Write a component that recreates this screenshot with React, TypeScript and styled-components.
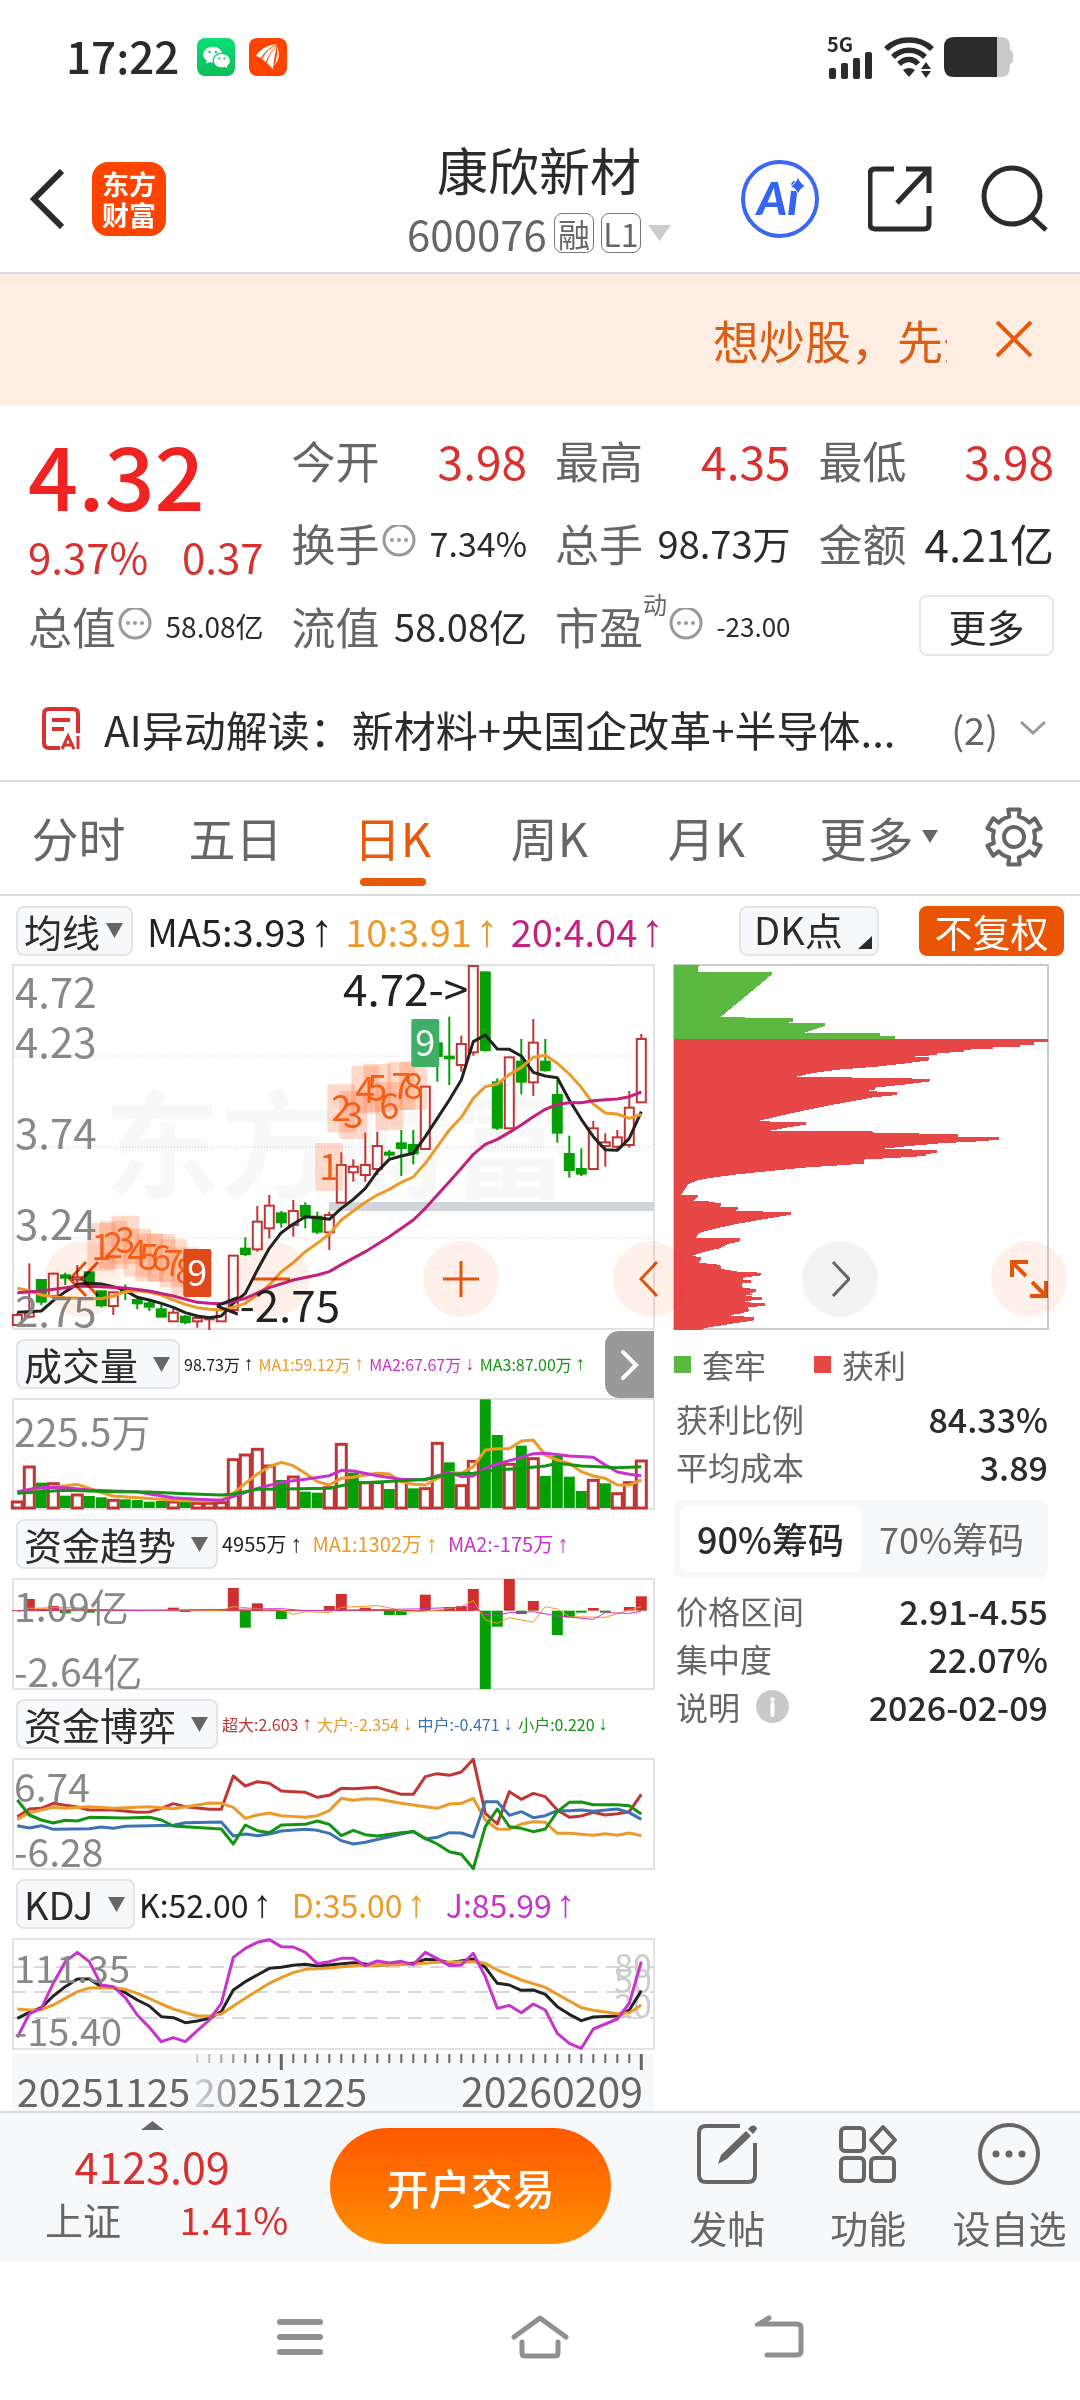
import React from "react";
import styled, { createGlobalStyle, css } from "styled-components";
import { RiWechatFill } from "react-icons/ri";

const C = {
  ink: "#2b2b2b",
  gray: "#666666",
  axis: "#888888",
  line: "#dcdcdc",
  soft: "#f7f8fa",
  red: "#d93030",
  up: "#c03635",
  down: "#05a005",
  orange: "#e8590c",
  ma1: "#222222",
  ma2: "#ec9a29",
  ma3: "#c3207f",
  violet: "#c833cc",
  green: "#149414",
  blue: "#3d72b4",
};

const FONT = '"Noto Sans CJK SC", "Noto Sans", sans-serif';

const Global = createGlobalStyle`
  * { box-sizing: border-box; }
  body { margin: 0; background: #fff; font-family: ${FONT}; color: ${C.ink}; }
  button, select { font: inherit; color: inherit; background: none; border: 0; padding: 0; margin: 0; }
  button { cursor: pointer; }
  svg { display: block; flex: none; }
  h1, p, dl, dd, dt { margin: 0; font-weight: 400; }
`;

/* ---------- shared chart helpers ---------- */

const BARS = 53;
const cx = (i: number) => 17.3 + 12 * i;

const toPoints = (flat: number[], top: number) => {
  const out: string[] = [];
  for (let k = 0; k < flat.length; k += 2) out.push(`${cx(flat[k])},${top + flat[k + 1] / 3}`);
  return out.join(" ");
};

const Line = ({ data, top, color, width = 3 }: { data: number[]; top: number; color: string; width?: number }) => (
  <polyline points={toPoints(data, top)} fill="none" stroke={color} strokeWidth={width} strokeLinejoin="round" />
);

const Plot = styled.svg`
  width: 100%;
  height: auto;
  overflow: visible;
`;
const PlotText = styled.text<{ $size?: number; $weight?: number; $color?: string }>`
  font-family: ${FONT};
  font-size: ${(p) => p.$size ?? 39}px;
  font-weight: ${(p) => p.$weight ?? 400};
  fill: ${(p) => p.$color ?? C.axis};
`;

const Frame = ({ y, h }: { y: number; h: number }) => (
  <rect x="13" y={y} width="641" height={h} fill="none" stroke="#e3e3e3" strokeWidth="2" />
);

/* ---------- status bar ---------- */

const StatusBar = styled.div`
  display: flex;
  align-items: center;
  height: 114px;
  padding: 0 67px 0 66px;
  gap: 14px;
`;
const Clock = styled.span`
  font-size: 44px;
  line-height: 60px;
  font-weight: 500;
  margin: 0 4px 4px 0;
`;
const AppBadge = styled.span<{ $bg: string }>`
  display: grid;
  place-items: center;
  width: 38px;
  height: 38px;
  border-radius: 8px;
  background: ${(p) => p.$bg};
  color: #fff;
`;
const StatusRight = styled.div`
  display: flex;
  align-items: center;
  gap: 10px;
  margin-left: auto;
`;
const Signal = styled.div`
  display: grid;
  span {
    font-size: 20px;
    line-height: 16px;
    font-weight: 700;
  }
`;

/* ---------- header ---------- */

const Header = styled.header`
  display: grid;
  grid-template-columns: 1fr auto 1fr;
  align-items: center;
  height: 160px;
  padding: 11px 32px 0 30px;
  border-bottom: 2px solid ${C.line};
`;
const HeadLeft = styled.div`
  display: flex;
  align-items: center;
  gap: 28px;
`;
const Logo = styled.a`
  display: grid;
  place-content: center;
  width: 74px;
  height: 74px;
  border-radius: 16px;
  background: #ff4400;
  color: #fff;
  font-size: 27px;
  line-height: 31px;
  font-weight: 700;
  text-decoration: none;
`;
const HeadMid = styled.div`
  text-align: center;
`;
const Title = styled.h1`
  font-size: 51px;
  line-height: 68px;
`;
const Code = styled.button`
  display: flex;
  align-items: center;
  gap: 7px;
  font-size: 42px;
  line-height: 60px;
  color: ${C.gray};
`;
const Tag = styled.span`
  display: grid;
  place-items: center;
  width: 40px;
  height: 40px;
  border: 1px solid #777;
  border-radius: 8px;
  font-size: 32px;
  line-height: 36px;
`;
const HeadRight = styled.div`
  display: flex;
  align-items: center;
  justify-content: flex-end;
  gap: 49px;
`;

/* ---------- banner ---------- */

const Banner = styled.div`
  display: flex;
  align-items: center;
  justify-content: flex-end;
  gap: 48px;
  height: 132px;
  padding: 0 47px 2px 28px;
  background: #fdede3;
  color: ${C.orange};
`;
const Marquee = styled.a`
  width: 234px;
  overflow: hidden;
  white-space: nowrap;
  font-size: 46px;
  line-height: 64px;
  color: #d85f17;
  text-decoration: none;
`;

/* ---------- quote ---------- */

const Quote = styled.section`
  display: grid;
  grid-template-columns: repeat(4, minmax(0, 1fr));
  grid-auto-rows: 83px;
  column-gap: 28px;
  padding: 12px 26px 12px 28px;
`;
const PriceBlock = styled.div`
  grid-row: span 2;
  color: ${C.red};
`;
const Price = styled.p`
  font-size: 88px;
  line-height: 110px;
  font-weight: 500;
  color: #f02323;
`;
const Change = styled.p`
  display: flex;
  justify-content: space-between;
  font-size: 42px;
  line-height: 56px;
`;
const Cell = styled.div`
  display: flex;
  align-items: center;
  white-space: nowrap;
`;
const Label = styled.span`
  font-size: 44px;
  color: ${C.gray};
`;
const Sup = styled.sup`
  align-self: flex-start;
  font-size: 24px;
  line-height: 36px;
  padding-top: 2px;
  color: ${C.gray};
`;
const Value = styled.span<{ $size: number; $up?: boolean }>`
  margin-left: auto;
  font-size: ${(p) => p.$size}px;
  color: ${(p) => (p.$up ? C.red : C.ink)};
`;
const MoreButton = styled.button`
  width: 135px;
  height: 61px;
  margin-left: auto;
  border: 2px solid #e6e6e6;
  border-radius: 8px;
  font-size: 38px;
  line-height: 54px;
`;

const Insight = styled.button`
  display: flex;
  align-items: center;
  width: 100%;
  height: 101px;
  padding: 0 34px 3px 42px;
  font-size: 42px;
  white-space: nowrap;
  text-align: left;
`;
const InsightText = styled.span`
  flex: 1;
  margin-left: 24px;
`;
const Count = styled.span`
  font-size: 38px;
  margin-right: 22px;
  color: ${C.gray};
`;

/* ---------- tabs ---------- */

const Tabs = styled.nav`
  display: grid;
  grid-template-columns: repeat(5, 157fr) 187fr 84fr;
  height: 116px;
  padding-right: 24px;
  border-top: 2px solid ${C.line};
  border-bottom: 2px solid ${C.line};
`;
const Tab = styled.button<{ $active?: boolean }>`
  display: flex;
  align-items: center;
  justify-content: center;
  gap: 8px;
  position: relative;
  padding-bottom: 3px;
  font-size: 47px;
  white-space: nowrap;
  color: ${(p) => (p.$active ? C.orange : C.gray)};
  ${(p) =>
    p.$active &&
    css`
      &::after {
        content: "";
        position: absolute;
        bottom: 8px;
        width: 66px;
        height: 8px;
        border-radius: 4px;
        background: ${C.orange};
      }
    `}
`;

/* ---------- indicator rows ---------- */

const Picker = styled.label<{ $gap?: number }>`
  display: flex;
  align-items: center;
  gap: ${(p) => p.$gap ?? 24}px;
  flex: none;
  height: 50px;
  padding: 0 8px 0 6px;
  border: 2px solid #e2e4e8;
  border-radius: 8px;
  background: ${C.soft};
  select {
    appearance: none;
    font-size: 38px;
    line-height: 46px;
    height: 46px;
    outline: 0;
  }
`;
const MaRow = styled.div`
  display: flex;
  align-items: center;
  height: 69px;
  padding: 0 16px;
  gap: 14px;
`;
const Readings = styled.div<{ $size: number; $gap: number }>`
  display: flex;
  align-items: center;
  gap: ${(p) => p.$gap}px;
  font-size: ${(p) => p.$size}px;
  line-height: 48px;
  white-space: nowrap;
`;
const Reading = styled.span<{ $color: string }>`
  display: inline-flex;
  align-items: center;
  color: ${(p) => p.$color};
`;
const Arrow = styled.span`
  font-family: "Liberation Sans", sans-serif;
  font-size: 1.2em;
  margin-left: 4px;
`;
const DkButton = styled.button`
  display: flex;
  align-items: flex-end;
  justify-content: space-between;
  width: 140px;
  height: 50px;
  margin-left: auto;
  padding: 0 5px 5px 13px;
  border: 2px solid #e2e4e8;
  border-radius: 8px;
  background: ${C.soft};
  font-size: 38px;
  line-height: 41px;
`;
const AdjustButton = styled.button`
  width: 145px;
  height: 50px;
  margin-left: 26px;
  border-radius: 8px;
  background: #e95504;
  color: #fff;
  font-size: 38px;
  line-height: 48px;
`;
const PanelHead = styled.div`
  display: flex;
  align-items: center;
  height: 70px;
  padding-left: 4px;
  gap: 4px;
`;
const Expander = styled.button`
  display: grid;
  place-items: center;
  flex: none;
  align-self: flex-start;
  width: 49px;
  height: 67px;
  margin: 2px 0 0 auto;
  border-radius: 14px 0 0 14px;
  background: #999;
`;

/* ---------- chart area ---------- */

const Body = styled.main`
  position: relative;
  display: grid;
  grid-template-columns: minmax(0, 642fr) minmax(0, 374fr);
  column-gap: 20px;
  padding: 0 32px 0 12px;
`;
const FabRow = styled.div`
  position: absolute;
  top: 276px;
  left: 45px;
  right: 13px;
  display: flex;
  justify-content: space-between;
  mix-blend-mode: multiply;
  pointer-events: none;
`;
const Fab = styled.button<{ $muted?: boolean }>`
  display: grid;
  place-items: center;
  width: 76px;
  height: 76px;
  border-radius: 50%;
  pointer-events: auto;
  color: ${(p) => (p.$muted ? "#666" : "#e0560f")};
  background: ${(p) => (p.$muted ? "#f3f3f3" : "#fff1ea")};
`;

const Legend = styled.div`
  display: flex;
  align-items: center;
  gap: 48px;
  height: 66px;
  padding-top: 4px;
  font-size: 32px;
  color: ${C.gray};
`;
const LegendItem = styled.span<{ $color: string }>`
  display: flex;
  align-items: center;
  gap: 11px;
  &::before {
    content: "";
    width: 17px;
    height: 17px;
    background: ${(p) => p.$color};
  }
`;
const Stats = styled.dl`
  padding-left: 2px;
`;
const Stat = styled.div`
  display: flex;
  align-items: center;
  justify-content: space-between;
  height: 48px;
  padding-bottom: 2px;
  dt {
    display: flex;
    align-items: center;
    gap: 16px;
    font-size: 32px;
    color: ${C.gray};
  }
  dd {
    font-size: 34px;
    font-weight: 500;
  }
`;
const Segment = styled.div`
  display: grid;
  grid-template-columns: 1fr 1fr;
  height: 78px;
  margin: 9px 0;
  padding: 6px;
  border-radius: 8px;
  background: ${C.soft};
`;
const SegmentButton = styled.button<{ $active?: boolean }>`
  padding-bottom: 2px;
  border-radius: 8px;
  font-size: 36px;
  white-space: nowrap;
  font-weight: ${(p) => (p.$active ? 500 : 400)};
  color: ${(p) => (p.$active ? C.ink : C.gray)};
  background: ${(p) => (p.$active ? "#fff" : "transparent")};
`;

/* ---------- bottom ---------- */

const BottomBar = styled.footer`
  display: grid;
  grid-template-columns: 304fr 352fr repeat(3, 141fr);
  height: 150px;
  border-top: 2px solid #d8dade;
  background: ${C.soft};
`;
const IndexCard = styled.a`
  display: flex;
  flex-direction: column;
  align-items: center;
  padding-top: 8px;
  color: ${C.red};
  text-decoration: none;
`;
const IndexValue = styled.span`
  margin-top: 6px;
  font-size: 43px;
  line-height: 58px;
`;
const IndexRow = styled.span`
  display: flex;
  justify-content: space-between;
  align-self: stretch;
  padding: 0 16px 0 45px;
  font-size: 38px;
  line-height: 50px;
`;
const Muted = styled.span`
  color: ${C.gray};
`;
const Cta = styled.button`
  width: 281px;
  height: 116px;
  margin: 15px 0 0 26px;
  border-radius: 58px;
  background: linear-gradient(#ff5800, #ff8e00);
  color: #fff;
  font-size: 42px;
  font-weight: 500;
`;
const Action = styled.button`
  display: flex;
  flex-direction: column;
  align-items: center;
  padding-top: 10px;
  gap: 14px;
  font-size: 38px;
  line-height: 56px;
  white-space: nowrap;
  color: ${C.gray};
`;
const SystemNav = styled.nav`
  display: flex;
  align-items: center;
  justify-content: center;
  gap: 180px;
  height: 139px;
  padding-top: 12px;
  color: #909090;
`;
const NavButton = styled.button`
  display: grid;
  place-items: center;
  width: 60px;
  height: 60px;
`;

/* ---------- icons ---------- */

const Caret = ({ w = 17, h = 15, color = C.gray }) => (
  <svg width={w} height={h} viewBox="0 0 17 15" preserveAspectRatio="none" aria-hidden="true">
    <path d="M0 0H17L8.500 15Z" fill={color} />
  </svg>
);

const Dots = () => (
  <svg width="36" height="36" viewBox="0 0 36 36" aria-hidden="true">
    <circle cx="19" cy="15" r="15" fill="none" stroke="#999" strokeWidth="3" />
    <g fill="#999">
      <circle cx="12" cy="15" r="2" />
      <circle cx="19" cy="15" r="2" />
      <circle cx="26" cy="15" r="2" />
    </g>
  </svg>
);

const Gear = () => {
  const pts: string[] = [];
  for (let t = 0; t < 6; t++) {
    [
      [-26, 21],
      [-13, 21],
      [-12, 28],
      [12, 28],
      [13, 21],
      [26, 21],
    ].forEach(([a, r]) => {
      const rad = ((t * 60 + a - 90) * Math.PI) / 180;
      pts.push(`${30 + r * Math.cos(rad)},${30 + r * Math.sin(rad)}`);
    });
  }
  return (
    <svg width="60" height="60" viewBox="0 0 60 60" fill="none" stroke={C.gray} strokeWidth="4" strokeLinejoin="round">
      <polygon points={pts.join(" ")} />
      <circle cx="30" cy="30" r="10" />
    </svg>
  );
};

/* ---------- candle data: high, top, bottom, low, 1 = rising ---------- */

const candles: number[][] = [
  [1088, 1095, 1125, 1125, 1], [940, 1088, 1100, 1105, 1], [990, 990, 1055, 1065, 0], [968, 971, 1038, 1040, 1],
  [968, 976, 983, 1005, 0], [945, 982, 989, 1000, 1], [967, 967, 1000, 1000, 0], [1024, 1024, 1066, 1072, 0],
  [1027, 1027, 1068, 1095, 1], [1003, 1018, 1026, 1050, 0], [1045, 1050, 1060, 1078, 0], [1050, 1060, 1070, 1083, 0],
  [1065, 1078, 1100, 1100, 0], [1075, 1088, 1114, 1114, 1], [1095, 1100, 1116, 1123, 0], [1100, 1104, 1114, 1133, 1],
  [1100, 1103, 1108, 1140, 1], [1078, 1080, 1114, 1114, 1], [916, 917, 1080, 1080, 1], [862, 896, 912, 918, 0],
  [768, 815, 898, 905, 1], [735, 767, 835, 865, 1], [783, 790, 817, 833, 0], [750, 783, 825, 860, 1],
  [757, 768, 798, 835, 0], [785, 800, 845, 852, 0], [785, 795, 847, 900, 1], [607, 645, 758, 758, 1],
  [628, 650, 667, 695, 1], [548, 645, 675, 695, 1], [545, 588, 657, 675, 1], [600, 608, 614, 625, 0],
  [540, 580, 594, 678, 0], [540, 585, 610, 643, 0], [410, 410, 597, 597, 1], [280, 280, 318, 395, 0],
  [200, 320, 325, 405, 0], [257, 282, 345, 365, 1], [47, 48, 307, 317, 1], [67, 67, 300, 305, 0],
  [385, 397, 533, 540, 0], [322, 322, 535, 535, 1], [267, 335, 395, 433, 0], [207, 278, 397, 438, 1],
  [267, 335, 360, 365, 0], [390, 435, 548, 578, 0], [557, 612, 660, 683, 0], [595, 657, 671, 678, 0],
  [513, 535, 657, 657, 1], [550, 577, 588, 650, 1], [540, 562, 590, 597, 1], [423, 473, 585, 593, 1],
  [252, 267, 457, 457, 1],
];

const ma5 = [0,1087,2,1083,3,1052,4,1025,5,1003,6,1000,7,1002,8,1010,9,1022,10,1042,11,1050,12,1060,13,1072,14,1088,15,1098,16,1103,17,1098,18,1060,19,1030,20,960,21,895,22,848,23,822,24,800,25,803,26,808,27,775,28,748,29,715,30,665,31,628,32,618,33,610,34,560,35,505,36,450,37,390,38,275,39,255,40,297,41,298,42,318,43,367,44,378,45,383,46,450,47,508,48,560,49,599,50,601,51,565,52,485];
const ma10 = [0,1015,1,1022,2,1035,3,1040,4,1043,5,1045,7,1046,8,1038,9,1025,10,1022,11,1027,12,1035,13,1050,14,1063,15,1073,16,1078,17,1080,18,1072,19,1060,20,1035,21,1005,22,965,23,938,24,905,25,880,26,852,27,810,28,783,29,757,30,735,31,718,32,697,33,681,34,640,35,590,36,540,37,502,38,445,39,410,40,402,41,373,42,352,43,322,44,316,45,340,46,372,47,412,48,462,49,489,50,492,51,505,52,493];
const ma20 = [0,1028,2,1023,4,1013,5,1008,7,1010,9,1014,11,1023,13,1038,15,1057,16,1060,17,1061,18,1055,19,1045,21,1013,23,990,25,975,26,965,27,944,29,905,31,860,33,810,34,775,35,735,36,695,37,655,38,613,39,583,40,568,41,547,42,525,43,500,44,478,45,463,46,458,47,458,48,452,49,449,50,447,51,440,52,426];

const counts: number[][] = [
  [7, 819, 1], [8, 812, 2], [9, 797, 3], [10, 836, 4], [11, 850, 5], [12, 852, 6], [13, 868, 7], [14, 892, 8], [15, 897, 9],
  [26, 579, 1], [27, 403, 2], [28, 423, 3], [29, 347, 4], [30, 342, 5], [31, 397, 6], [32, 336, 7], [33, 336, 8], [34, 207, 9],
];

const priceScale: [string, number][] = [["4.72", 1008], ["4.23", 1058], ["3.74", 1149], ["3.24", 1240], ["2.75", 1327]];

const MainChart = () => (
  <Plot viewBox="12 965 642 364" role="img" aria-label="日K">
    <PlotText x="104" y="1189" $size={116} $weight={700} $color="#f8f8f8">东方财富</PlotText>
    <Frame y={965} h={364} />
    {[1056, 1147, 1238].map((y) => (
      <line key={y} x1="12" x2="654" y1={y} y2={y} stroke="#c8c8c8" strokeDasharray="1 2" />
    ))}
    <rect x="329" y="1202" width="325" height="9" fill="#d1d5da" />
    {candles.map(([hi, top, bottom, lo, rise], i) => {
      const x = cx(i);
      const y = (v: number) => 950 + v / 3;
      const color = rise ? C.up : C.down;
      return (
        <g key={i} stroke={color} strokeWidth="2">
          <line x1={x} x2={x} y1={y(hi)} y2={y(top)} />
          <line x1={x} x2={x} y1={y(bottom)} y2={y(lo)} />
          <rect x={x - 4.5} y={y(top)} width="9" height={(bottom - top) / 3} fill={rise ? "#fff" : color} />
        </g>
      );
    })}
    {counts.map(([i, top, n]) => {
      const last = n === 9;
      const fill = last ? (i === 15 ? "#e04a1b" : "#3fae66") : "rgba(255,110,50,0.26)";
      return (
        <g key={`${i}-${n}`}>
          <rect x={cx(i) - 14} y={950 + top / 3} width="28" height="48" rx="2" fill={fill} />
          <PlotText x={cx(i)} y={987 + top / 3} textAnchor="middle" $size={36} $color={last ? "#fff" : "#f45c10"}>{n}</PlotText>
        </g>
      );
    })}
    <Line data={ma5} top={950} color={C.ma1} />
    <Line data={ma10} top={950} color={C.ma2} />
    <Line data={ma20} top={950} color={C.ma3} />
    {priceScale.map(([t, y]) => (
      <PlotText key={t} x="15" y={y} $size={42}>{t}</PlotText>
    ))}
    <PlotText x="343" y="1006" $size={44} $color="#222">{"4.72->"}</PlotText>
    <PlotText x="215" y="1322" $size={44} $color="#222">{"<-2.75"}</PlotText>
  </Plot>
);

const volume = [543,438,488,488,527,522,528,532,538,538,540,545,543,543,545,547,547,545,416,402,385,435,480,468,515,518,500,370,458,485,485,507,478,505,503,367,427,494,421,238,345,430,377,413,468,408,470,513,478,490,518,485,420];
const volRise = [1,1,0,1,0,1,0,0,1,0,0,0,0,1,0,1,1,1,1,1,1,1,0,1,0,0,1,1,0,1,1,0,1,0,1,1,0,1,1,0,0,1,0,1,0,0,0,0,1,0,1,1,1];
const vol1 = [0,518,1,510,3,500,4,497,5,493,6,505,7,518,8,528,10,533,12,538,14,542,16,543,17,540,18,520,19,490,20,462,21,440,22,427,23,437,24,460,25,485,26,495,27,475,28,472,29,465,30,460,31,462,32,485,33,493,34,495,35,475,36,457,37,460,38,440,39,390,40,386,41,386,42,363,43,360,44,405,45,420,46,430,47,455,48,468,49,475,50,495,51,495,52,480];
const vol2 = [0,515,2,502,4,503,6,510,8,513,10,515,11,522,13,533,15,538,17,541,18,530,20,505,22,487,24,478,26,467,27,451,28,453,30,467,32,478,34,480,35,467,36,458,37,470,38,468,39,445,40,432,42,412,43,401,44,400,46,408,48,412,49,435,50,456,51,463,52,467];
const vol3 = [0,520,4,511,8,515,11,516,14,521,17,525,18,522,19,515,20,508,22,507,26,505,28,490,30,486,32,482,34,478,36,463,38,460,40,450,42,445,44,438,45,430,47,438,49,441,50,443,52,440];

const VolumeChart = () => (
  <Plot viewBox="12 1399 642 110" role="img" aria-label="成交量">
    <Frame y={1399} h={110} />
    {volume.map((v, i) => {
      const y = 1320 + v / 3;
      return volRise[i] ? (
        <rect key={i} x={cx(i) - 5} y={y + 1} width="10" height={1508 - y - 1} fill="#fff" stroke={C.up} strokeWidth="3" />
      ) : (
        <rect key={i} x={cx(i) - 5.5} y={y} width="11" height={1508 - y} fill={C.down} />
      );
    })}
    <Line data={vol1} top={1320} color={C.ma2} />
    <Line data={vol2} top={1320} color={C.violet} />
    <Line data={vol3} top={1320} color={C.green} />
    <PlotText x="14" y="1447">225.5万</PlotText>
  </Plot>
);

const trend = [1,267,2,296,3,288,4,310,6,308,13,293,14,306,18,234,19,353,20,280,22,327,26,288,27,252,29,293,31,315,32,315,34,254,36,291,37,288,38,237,39,537,40,350,41,207,42,312,43,273,45,375,46,322,47,308,48,294,49,308,51,291,52,259];
const trend1 = [0,305,1,295,4,292,5,293,6,298,10,300,17,301,18,290,20,296,22,300,23,313,24,305,26,308,27,292,30,287,31,293,32,303,33,306,35,300,37,290,38,272,39,330,40,340,41,323,43,337,44,290,45,297,46,320,49,322,51,300,52,290];
const trend2 = [0,303,3,297,10,301,18,298,22,296,24,302,27,300,33,297,38,290,39,313,40,317,41,308,43,305,45,318,48,328,49,308,51,310,52,304];

const TrendChart = () => {
  const zero = 1510 + 302 / 3;
  const bars: React.ReactNode[] = [];
  for (let k = 0; k < trend.length; k += 2) {
    const y = 1510 + trend[k + 1] / 3;
    bars.push(
      <rect key={k} x={cx(trend[k]) - 5.5} width="11" y={Math.min(y, zero)} height={Math.abs(y - zero)} fill={y < zero ? "#cf2f2f" : C.down} />
    );
  }
  return (
    <Plot viewBox="12 1579 642 110" role="img" aria-label="资金趋势">
      <Frame y={1579} h={110} />
      {bars}
      <line x1="12" x2={cx(38)} y1={zero} y2={zero} stroke={C.up} />
      <Line data={trend1} top={1510} color={C.ma2} width={1} />
      <Line data={trend2} top={1510} color={C.violet} width={1} />
      <PlotText x="14" y="1622">1.09亿</PlotText>
      <PlotText x="14" y="1687">-2.64亿</PlotText>
    </Plot>
  );
};

const gameRed = [0,350,1,327,2,325,3,310,4,316,5,321,6,330,8,330,10,337,11,336,12,325,13,311,14,320,16,328,17,328,18,228,19,258,20,245,21,250,22,273,23,275,24,277,25,292,26,286,27,265,28,266,30,262,32,283,33,283,34,230,35,221,36,226,37,216,38,178,39,340,40,372,41,275,42,298,43,280,44,290,45,330,46,352,47,348,48,337,49,345,50,341,51,335,52,283];
const gameOrange = [0,358,1,338,3,322,4,325,6,320,8,325,11,320,13,326,15,315,16,309,17,310,18,322,19,355,20,345,21,339,22,347,24,352,25,347,26,332,27,295,28,301,29,296,30,297,32,310,34,320,35,325,36,312,37,310,38,295,39,360,40,387,41,388,42,372,43,365,44,367,45,400,46,400,48,406,49,401,50,406,51,399,52,407];
const gameBlue = [0,377,1,384,2,377,3,388,6,386,7,381,8,385,9,379,13,376,14,368,17,366,18,408,19,402,20,407,21,402,22,393,24,388,25,391,26,400,27,422,28,432,29,427,31,410,33,394,34,417,35,412,36,398,37,399,38,411,39,305,40,305,41,346,42,335,43,353,44,347,45,332,46,332,47,330,48,334,50,327,51,338,52,358];
const gameGreen = [0,300,1,345,2,360,3,369,4,361,5,363,6,352,9,354,11,352,12,360,13,378,16,385,17,387,18,432,19,375,20,392,21,398,22,375,24,373,25,363,26,373,27,407,28,391,29,404,30,408,32,398,33,395,34,415,35,432,36,455,37,463,38,506,39,380,40,327,41,380,42,385,43,395,44,387,45,335,46,307,47,306,48,314,50,314,51,317,52,342];

const GameChart = () => (
  <Plot viewBox="12 1759 642 110" role="img" aria-label="资金博弈">
    <Frame y={1759} h={110} />
    <Line data={gameRed} top={1700} color={C.up} />
    <Line data={gameOrange} top={1700} color={C.ma2} />
    <Line data={gameBlue} top={1700} color={C.blue} />
    <Line data={gameGreen} top={1700} color={C.green} />
    <PlotText x="14" y="1802">6.74</PlotText>
    <PlotText x="14" y="1867">-6.28</PlotText>
  </Plot>
);

const kLine = [0,445,1,427,2,413,3,378,4,350,5,327,6,327,7,350,8,352,9,368,10,390,11,408,12,440,13,443,14,458,15,453,16,445,17,425,18,360,19,335,20,315,21,295,22,292,23,286,24,283,25,288,26,285,28,278,30,286,33,280,34,268,35,270,36,278,38,267,39,292,40,340,41,345,42,361,43,360,44,373,45,410,46,433,47,452,48,441,50,438,51,420,52,362];
const dLine = [0,417,1,420,2,419,3,405,4,385,5,365,6,354,8,353,9,358,10,370,11,385,12,402,13,417,14,428,15,438,16,438,17,432,18,408,19,385,20,362,21,340,22,323,23,308,24,298,26,294,28,287,30,286,33,283,35,277,38,275,39,280,40,300,42,330,44,352,46,393,47,413,48,421,50,431,51,428,52,405];
const jLine = [0,502,1,432,2,415,3,340,4,275,5,247,6,275,7,345,8,350,9,383,10,435,11,472,12,515,13,503,14,515,15,482,16,450,17,400,18,262,19,235,20,217,21,209,22,230,23,231,24,247,25,281,26,275,27,265,28,265,29,287,30,273,31,279,32,274,33,284,34,247,35,266,36,287,37,285,38,250,39,320,40,415,41,406,42,428,43,402,44,420,45,490,46,520,47,535,48,477,49,462,50,447,51,400,52,275];

const kdjScale: [string, number][] = [["80", 1978], ["50", 1993], ["20", 2018]];

const KdjChart = () => (
  <Plot viewBox="12 1939 642 110" role="img" aria-label="KDJ">
    <Frame y={1939} h={110} />
    {[1967, 1992, 2018].map((y) => (
      <line key={y} x1="12" x2="654" y1={y} y2={y} stroke="#d8d8d8" strokeWidth="2" strokeDasharray="14 8" />
    ))}
    {kdjScale.map(([t, y]) => (
      <PlotText key={t} x="652" y={y} textAnchor="end" $size={34} $color="#ccc">{t}</PlotText>
    ))}
    <Line data={kLine} top={1870} color={C.ma1} />
    <Line data={dLine} top={1870} color={C.ma2} />
    <Line data={jLine} top={1870} color={C.violet} />
    <PlotText x="14" y="1983" $size={38}>111.35</PlotText>
    <PlotText x="14" y="2046" $size={38}>-15.40</PlotText>
  </Plot>
);

const Timeline = () => (
  <Plot viewBox="12 2049 642 62" role="img" aria-label="日期">
    <defs>
      <linearGradient id="fade" gradientUnits="userSpaceOnUse" x1="190" x2="250" y1="0" y2="0">
        <stop offset="0" stopColor="#666" stopOpacity="0.150" />
        <stop offset="1" stopColor="#666" />
      </linearGradient>
    </defs>
    <rect x="12" y="2054" width="642" height="57" fill={C.soft} />
    {Array.from({ length: BARS - 15 }, (_, k) => k + 15).map((i) => {
      const major = i === 22 || i === 52;
      return (
        <rect key={i} x={cx(i) - (major ? 1.5 : 1)} y="2054" width={major ? 3 : 2} height={major ? 16 : 9} fill={C.gray} opacity={Math.min(1, (i - 13) / 7)} />
      );
    })}
    <PlotText x="17" y="2107" $color="#666">20251125</PlotText>
    <PlotText x="194" y="2107" $color="url(#fade)">20251225</PlotText>
    <PlotText x="643" y="2107" textAnchor="end" $size={41} $color="#666">20260209</PlotText>
  </Plot>
);

const trapped = "43,45 117,45 113,66 335,66 335,74 182,201 255,201 255,205 399,205 399,215 380,219 495,219 495,227 428,250 660,250 660,259 705,259 705,268 43,268";
const profit = "43,268 1165,268 1165,277 1122,277 1122,284 1080,284 1080,290 1000,290 1000,297 912,299 912,306 830,309 830,315 760,320 718,322 807,322 807,331 730,341 650,350 535,359 460,369 409,380 575,380 575,384 810,386 810,394 740,403 645,413 645,420 612,423 710,427 710,435 640,442 515,465 440,480 370,495 290,514 438,516 438,524 385,532 332,542 632,542 648,550 895,551 895,560 1016,561 1016,569 957,574 840,580 727,590 672,596 755,597 755,601 831,601 831,609 797,612 797,618 732,622 608,629 611,632 611,641 538,646 430,653 300,666 225,674 150,684 110,692 85,702 63,735 113,735 113,742 102,752 147,753 147,757 184,758 184,768 178,770 234,771 234,780 217,784 393,785 393,794 320,806 235,821 165,836 120,848 106,864 240,865 240,874 205,882 178,895 135,905 90,919 124,920 124,928 114,940 165,941 184,948 184,957 235,965 303,968 303,976 250,983 247,990 273,991 273,998 247,1000 247,1012 287,1018 287,1026 270,1030 278,1034 247,1038 305,1041 305,1049 256,1053 256,1057 314,1059 314,1067 260,1073 267,1080 267,1084 240,1091 205,1096 283,1102 283,1111 210,1122 135,1134 125,1139 43,1139";

const ChipChart = () => (
  <Plot viewBox="674 965 374 364" role="img" aria-label="筹码分布">
    <rect x="674" y="965" width="374" height="364" fill="none" stroke="#cbcbcb" strokeWidth="2" />
    <g transform="translate(660 950) scale(0.333333)" shapeRendering="crispEdges">
      <polygon points={trapped} fill="#5bb942" />
      <polygon points={profit} fill="#e84748" />
    </g>
  </Plot>
);

/* ---------- page ---------- */

type R = [string, string, string];

const ReadingList = ({ items, size, gap }: { items: R[]; size: number; gap: number }) => (
  <Readings $size={size} $gap={gap}>
    {items.map(([text, arrow, color]) => (
      <Reading key={text} $color={color}>
        {text}
        <Arrow>{arrow}</Arrow>
      </Reading>
    ))}
  </Readings>
);

const Indicator = ({ name, gap }: { name: string; gap?: number }) => (
  <Picker $gap={gap}>
    <select aria-label={name} defaultValue={name}>
      <option>{name}</option>
    </select>
    <Caret />
  </Picker>
);

export default function App() {
  return (
    <>
      <Global />
      <StatusBar>
        <Clock>17:22</Clock>
        <AppBadge $bg="linear-gradient(#09e074, #0cbd5c)">
          <RiWechatFill size={29} />
        </AppBadge>
        <AppBadge $bg="#ff4400">
          <svg width="30" height="30" viewBox="0 0 30 30" fill="#fff">
            <path d="M3 14Q8 4 24 2Q12 8 8 16Z" />
            <path d="M9 17Q14 7 24 3Q16 11 13 20Z" />
            <path d="M14 21Q17 10 24 4Q21 14 20 27Z" />
            <path d="M21 24Q25 14 24 5Q29 15 21 24Z" />
          </svg>
        </AppBadge>
        <StatusRight>
          <Signal>
            <span>5G</span>
            <svg width="47" height="27" viewBox="0 0 47 27" fill={C.ink}>
              <rect x="2" y="16" width="7" height="11" rx="2" />
              <rect x="14" y="11" width="7" height="16" rx="2" />
              <rect x="26" y="6" width="7" height="21" rx="2" />
              <rect x="38" y="0" width="7" height="27" rx="2" />
            </svg>
          </Signal>
          <svg width="50" height="42" viewBox="0 0 50 42" fill="none" stroke={C.ink} strokeWidth="5.500">
            <path d="M2 13C14 1 36 1 48 13" />
            <path d="M9 21C18 12 32 12 41 21" />
            <path d="M15 28C21 22 29 22 34 28" />
            <path d="M25 41L19 34Q25 30 31 34Z" fill={C.ink} stroke="none" />
            <path d="M37 33L42 26L47 33ZM37 35L42 42L47 35Z" fill={C.ink} stroke="none" />
          </svg>
          <svg width="69" height="40" viewBox="0 0 69 40">
            <path d="M53 0H57Q66 0 66 10V13Q69 14 69 17V23Q69 26 66 27V30Q66 40 57 40H53Z" fill="#cacaca" />
            <path d="M10 0H53V40H10Q0 40 0 30V10Q0 0 10 0Z" fill={C.ink} />
          </svg>
        </StatusRight>
      </StatusBar>

      <Header>
        <HeadLeft>
          <button aria-label="返回">
            <svg width="34" height="60" viewBox="0 0 34 60" fill="none" stroke={C.ink} strokeWidth="6">
              <path d="M32 2L4 30L32 58" />
            </svg>
          </button>
          <Logo href="#">
            <span>东方</span>
            <span>财富</span>
          </Logo>
        </HeadLeft>
        <HeadMid>
          <Title>康欣新材</Title>
          <Code>
            600076
            <Tag>融</Tag>
            <Tag>L1</Tag>
            <Caret w={23} h={16} color="#cccccc" />
          </Code>
        </HeadMid>
        <HeadRight>
          <button aria-label="Ai">
            <svg width="78" height="78" viewBox="0 0 78 78">
              <circle cx="39" cy="39" r="37" fill="none" stroke="#3b68f0" strokeWidth="4" />
              <text x="37" y="55" textAnchor="middle" fontFamily="Lato, sans-serif" fontStyle="italic" fontWeight="900" fontSize="46" fill="#3564f5">Ai</text>
              <path d="M57 16Q59 24 65 26Q59 28 57 35Q55 28 49 26Q55 24 57 16Z" fill="#3564f5" stroke="#fff" strokeWidth="1" />
            </svg>
          </button>
          <button aria-label="分享">
            <svg width="64" height="66" viewBox="0 0 64 66" fill="none" stroke={C.ink} strokeWidth="5">
              <path d="M26 3H7Q2 3 2 8V58Q2 63 7 63H56Q61 63 61 58V40" />
              <path d="M38 3H61V27M60 4L29 37" />
            </svg>
          </button>
          <button aria-label="搜索">
            <svg width="67" height="67" viewBox="0 0 67 67" fill="none" stroke={C.ink} strokeWidth="5">
              <circle cx="31" cy="31" r="28" />
              <path d="M51 52L65 65" />
            </svg>
          </button>
        </HeadRight>
      </Header>

      <Banner>
        <Marquee href="#">想炒股，先开</Marquee>
        <button aria-label="关闭">
          <svg width="38" height="38" viewBox="0 0 38 38" stroke={C.orange} strokeWidth="4">
            <path d="M2 2L36 36M36 2L2 36" />
          </svg>
        </button>
      </Banner>

      <Quote>
        <PriceBlock>
          <Price>4.32</Price>
          <Change>
            <span>9.37%</span>
            <span>0.37</span>
          </Change>
        </PriceBlock>
        <Cell><Label>今开</Label><Value $size={46} $up>3.98</Value></Cell>
        <Cell><Label>最高</Label><Value $size={46} $up>4.35</Value></Cell>
        <Cell><Label>最低</Label><Value $size={46} $up>3.98</Value></Cell>
        <Cell><Label>换手</Label><Dots /><Value $size={34}>7.34%</Value></Cell>
        <Cell><Label>总手</Label><Value $size={38}>98.73万</Value></Cell>
        <Cell><Label>金额</Label><Value $size={44}>4.21亿</Value></Cell>
        <Cell><Label>总值</Label><Dots /><Value $size={28}>58.08亿</Value></Cell>
        <Cell><Label>流值</Label><Value $size={38}>58.08亿</Value></Cell>
        <Cell><Label>市盈</Label><Sup>动</Sup><Dots /><Value $size={26}>-23.00</Value></Cell>
        <Cell><MoreButton>更多</MoreButton></Cell>
      </Quote>

      <Insight>
        <svg width="38" height="43" viewBox="0 0 38 43" fill="none" stroke={C.red} strokeWidth="4">
          <path d="M36 26V7Q36 2 31 2H7Q2 2 2 7V36Q2 41 7 41H18M10 13H28M10 22H22" />
          <path d="M20 42L26 29L32 42M22 38H30M36 29V42" strokeWidth="3" />
        </svg>
        <InsightText>AI异动解读：新材料+央国企改革+半导体...</InsightText>
        <Count>(2)</Count>
        <svg width="26" height="14" viewBox="0 0 26 14" fill="none" stroke="#999" strokeWidth="3">
          <path d="M1 1L13 12L25 1" />
        </svg>
      </Insight>

      <Tabs>
        <Tab>分时</Tab>
        <Tab>五日</Tab>
        <Tab $active>日K</Tab>
        <Tab>周K</Tab>
        <Tab>月K</Tab>
        <Tab>更多<Caret w={16} h={13} /></Tab>
        <Tab aria-label="设置"><Gear /></Tab>
      </Tabs>

      <MaRow>
        <Indicator name="均线" gap={5} />
        <ReadingList
          size={38}
          gap={12}
          items={[["MA5:3.93", "↑", C.ma1], ["10:3.91", "↑", C.ma2], ["20:4.04", "↑", C.ma3]]}
        />
        <DkButton>
          DK点
          <svg width="14" height="13" viewBox="0 0 14 13"><path d="M14 0V13H0Z" fill={C.ink} /></svg>
        </DkButton>
        <AdjustButton>不复权</AdjustButton>
      </MaRow>

      <Body>
        <section>
          <MainChart />
          <PanelHead>
            <Indicator name="成交量" gap={14} />
            <ReadingList
              size={16}
              gap={5}
              items={[["98.73万", "↑", C.ma1], ["MA1:59.12万", "↑", C.ma2], ["MA2:67.67万", "↓", C.violet], ["MA3:87.00万", "↑", C.green]]}
            />
            <Expander aria-label="展开">
              <svg width="20" height="32" viewBox="0 0 20 32" fill="none" stroke="#fff" strokeWidth="4" strokeLinecap="round">
                <path d="M3 3L16 16L3 29" />
              </svg>
            </Expander>
          </PanelHead>
          <VolumeChart />
          <PanelHead>
            <Indicator name="资金趋势" gap={14} />
            <ReadingList
              size={20}
              gap={10}
              items={[["4955万", "↑", C.ma1], ["MA1:1302万", "↑", C.ma2], ["MA2:-175万", "↑", C.violet]]}
            />
          </PanelHead>
          <TrendChart />
          <PanelHead>
            <Indicator name="资金博弈" gap={14} />
            <ReadingList
              size={16}
              gap={5}
              items={[["超大:2.603", "↑", C.up], ["大户:-2.354", "↓", C.ma2], ["中户:-0.471", "↓", C.blue], ["小户:0.220", "↓", C.green]]}
            />
          </PanelHead>
          <GameChart />
          <PanelHead>
            <Indicator name="KDJ" gap={14} />
            <ReadingList
              size={32}
              gap={20}
              items={[["K:52.00", "↑", C.ma1], ["D:35.00", "↑", C.ma2], ["J:85.99", "↑", C.violet]]}
            />
          </PanelHead>
          <KdjChart />
          <Timeline />
        </section>

        <aside>
          <ChipChart />
          <Legend>
            <LegendItem $color="#5bb942">套牢</LegendItem>
            <LegendItem $color="#e84748">获利</LegendItem>
          </Legend>
          <Stats>
            <Stat><dt>获利比例</dt><dd>84.33%</dd></Stat>
            <Stat><dt>平均成本</dt><dd>3.89</dd></Stat>
          </Stats>
          <Segment>
            <SegmentButton $active aria-pressed="true">90%筹码</SegmentButton>
            <SegmentButton aria-pressed="false">70%筹码</SegmentButton>
          </Segment>
          <Stats>
            <Stat><dt>价格区间</dt><dd>2.91-4.55</dd></Stat>
            <Stat><dt>集中度</dt><dd>22.07%</dd></Stat>
            <Stat>
              <dt>
                说明
                <svg width="33" height="33" viewBox="0 0 33 33">
                  <circle cx="16.500" cy="16.500" r="16.500" fill="#c9c9c9" />
                  <circle cx="16.500" cy="9.500" r="2.200" fill="#fff" />
                  <path d="M16.500 14V25" stroke="#fff" strokeWidth="4" strokeLinecap="round" />
                </svg>
              </dt>
              <dd>2026-02-09</dd>
            </Stat>
          </Stats>
        </aside>

        <FabRow>
          <Fab aria-label="快退">
            <svg width="34" height="38" viewBox="0 0 34 38" fill="none" stroke="currentColor" strokeWidth="3">
              <path d="M20 2L4 19L20 36M32 2L16 19L32 36" />
            </svg>
          </Fab>
          <Fab aria-label="缩小">
            <svg width="38" height="38" viewBox="0 0 38 38" stroke="currentColor" strokeWidth="3"><path d="M1 19H37" /></svg>
          </Fab>
          <Fab aria-label="放大">
            <svg width="38" height="38" viewBox="0 0 38 38" stroke="currentColor" strokeWidth="3"><path d="M1 19H37M19 1V37" /></svg>
          </Fab>
          <Fab aria-label="向左">
            <svg width="26" height="36" viewBox="0 0 26 36" fill="none" stroke="currentColor" strokeWidth="3"><path d="M19 1L3 18L19 35" /></svg>
          </Fab>
          <Fab $muted aria-label="向右">
            <svg width="20" height="36" viewBox="0 0 20 36" fill="none" stroke="currentColor" strokeWidth="3"><path d="M3 1L19 18L3 35" /></svg>
          </Fab>
          <Fab aria-label="全屏">
            <svg width="38" height="38" viewBox="0 0 38 38" fill="none" stroke="currentColor" strokeWidth="4">
              <path d="M2 17V2H18M3 3L16 16M36 21V36H20M35 35L22 22" />
            </svg>
          </Fab>
        </FabRow>
      </Body>

      <BottomBar>
        <IndexCard href="#">
          <svg width="23" height="9" viewBox="0 0 23 9"><path d="M11.500 0L23 9H0Z" fill={C.gray} /></svg>
          <IndexValue>4123.09</IndexValue>
          <IndexRow>
            <Muted>上证</Muted>
            <span>1.41%</span>
          </IndexRow>
        </IndexCard>
        <Cta>开户交易</Cta>
        <Action>
          <svg width="62" height="62" viewBox="0 0 62 62" fill="none" stroke={C.gray} strokeWidth="4">
            <path d="M44 3H10Q3 3 3 10V52Q3 59 10 59H52Q59 59 59 52V20" />
            <path d="M22 41L25 32L50 8L55 13L31 36Z" fill={C.gray} stroke="none" />
            <path d="M52 6L55 3Q60 1 61 6L57 11Z" fill={C.gray} stroke="none" />
          </svg>
          发帖
        </Action>
        <Action>
          <svg width="62" height="62" viewBox="0 0 62 62" fill="none" stroke={C.gray} strokeWidth="4">
            <rect x="4" y="5" width="23" height="23" rx="4" />
            <rect x="4" y="35" width="23" height="23" rx="4" />
            <rect x="34" y="35" width="23" height="23" rx="4" />
            <path d="M46 4L58 17L46 30L34 17Z" strokeLinejoin="round" />
          </svg>
          功能
        </Action>
        <Action>
          <svg width="62" height="62" viewBox="0 0 62 62" fill={C.gray}>
            <circle cx="31" cy="31" r="29" fill="none" stroke={C.gray} strokeWidth="4" />
            <circle cx="18" cy="31" r="3.500" />
            <circle cx="31" cy="31" r="3.500" />
            <circle cx="44" cy="31" r="3.500" />
          </svg>
          设自选
        </Action>
      </BottomBar>

      <SystemNav>
        <NavButton aria-label="菜单">
          <svg width="46" height="38" viewBox="0 0 46 38" stroke="currentColor" strokeWidth="6" strokeLinecap="round">
            <path d="M3 4H43M3 19H43M3 34H43" />
          </svg>
        </NavButton>
        <NavButton aria-label="主页">
          <svg width="58" height="44" viewBox="0 0 58 44" fill="none" stroke="currentColor" strokeWidth="5" strokeLinecap="round" strokeLinejoin="round">
            <path d="M3 22L29 3L55 22" />
            <path d="M11 27V38Q11 41 14 41H44Q47 41 47 38V27" />
          </svg>
        </NavButton>
        <NavButton aria-label="后退">
          <svg width="50" height="44" viewBox="0 0 50 44" fill="none" stroke="currentColor" strokeWidth="5" strokeLinecap="round">
            <path d="M14 3L4 9H42Q46 9 46 13V36Q46 40 42 40H12" />
          </svg>
        </NavButton>
      </SystemNav>
    </>
  );
}
